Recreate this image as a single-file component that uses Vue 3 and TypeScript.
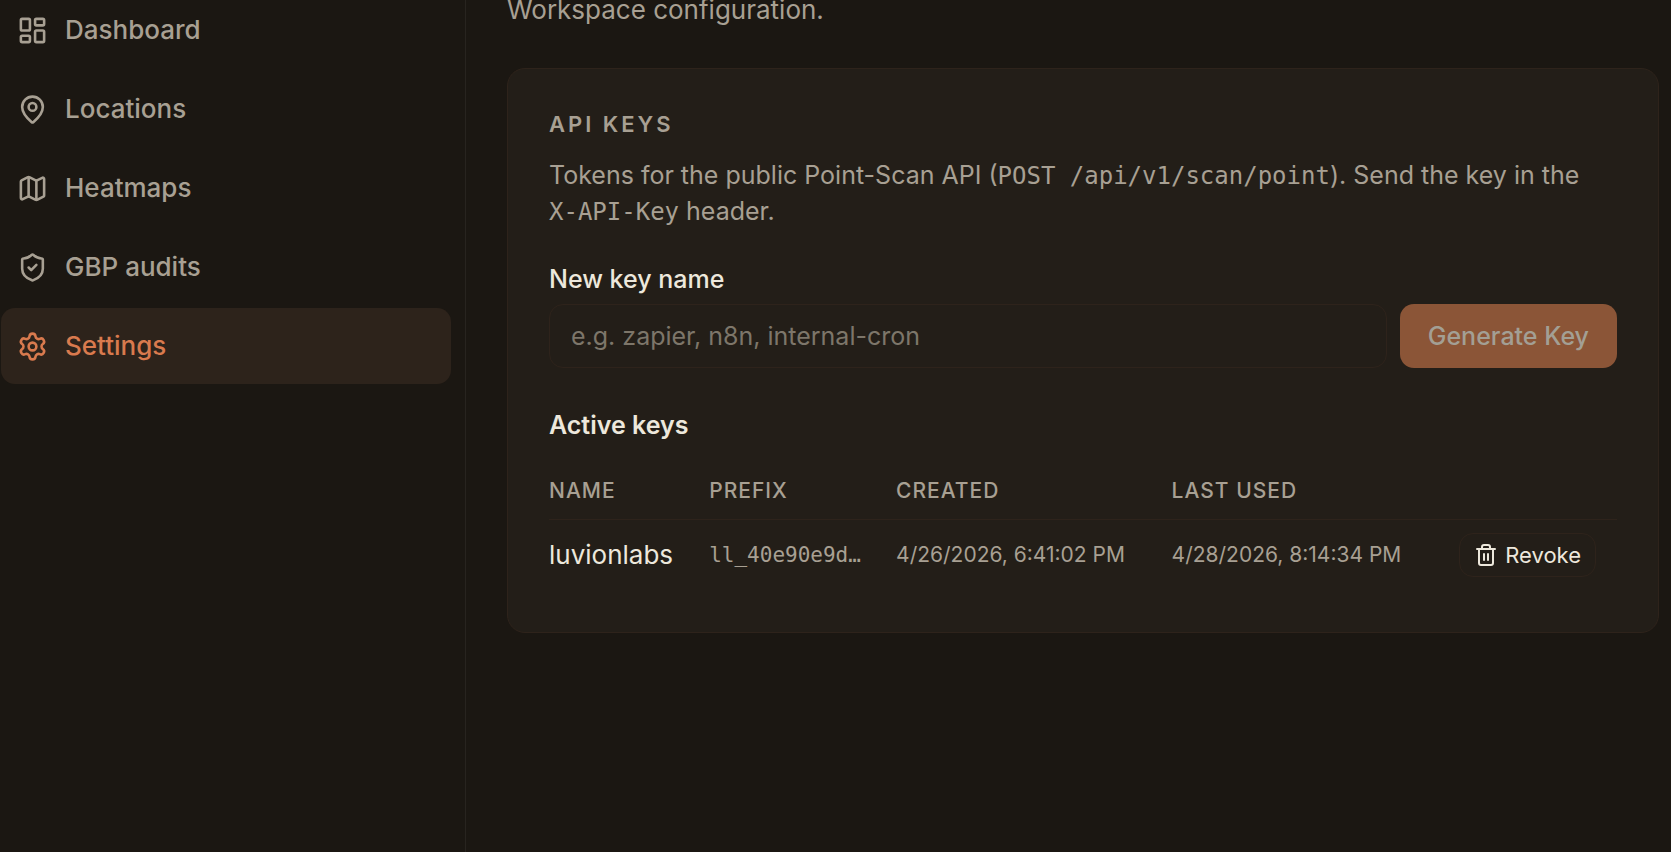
<script setup lang="ts">
import { ref } from 'vue'

interface NavItem {
  label: string
  icon: string
  active?: boolean
}

interface ApiKey {
  name: string
  prefix: string
  created: string
  lastUsed: string
}

const navItems: NavItem[] = [
  { label: 'Dashboard', icon: 'dashboard' },
  { label: 'Locations', icon: 'pin' },
  { label: 'Heatmaps', icon: 'map' },
  { label: 'GBP audits', icon: 'shield' },
  { label: 'Settings', icon: 'settings', active: true },
]

const keys: ApiKey[] = [
  {
    name: 'luvionlabs',
    prefix: 'll_40e90e9d…',
    created: '4/26/2026, 6:41:02 PM',
    lastUsed: '4/28/2026, 8:14:34 PM',
  },
]

const newKeyName = ref('')
</script>

<template>
  <div class="shell">
    <aside class="sidebar">
      <nav class="nav" aria-label="Main">
        <a
          v-for="item in navItems"
          :key="item.label"
          href="#"
          class="nav-item"
          :class="{ active: item.active }"
          :aria-current="item.active ? 'page' : undefined"
        >
          <svg class="icon nav-icon" viewBox="0 0 24 24" aria-hidden="true">
            <template v-if="item.icon === 'dashboard'">
              <rect x="3" y="3" width="7" height="9" rx="1" />
              <rect x="14" y="3" width="7" height="5" rx="1" />
              <rect x="14" y="12" width="7" height="9" rx="1" />
              <rect x="3" y="16" width="7" height="5" rx="1" />
            </template>
            <template v-else-if="item.icon === 'pin'">
              <path d="M20 10c0 4.993-5.539 10.193-7.399 11.799a1 1 0 0 1-1.202 0C9.539 20.193 4 14.993 4 10a8 8 0 0 1 16 0" />
              <circle cx="12" cy="10" r="3" />
            </template>
            <template v-else-if="item.icon === 'map'">
              <path d="M14.106 5.553a2 2 0 0 0 1.788 0l3.659-1.83A1 1 0 0 1 21 4.619v12.764a1 1 0 0 1-.553.894l-4.553 2.277a2 2 0 0 1-1.788 0l-4.212-2.106a2 2 0 0 0-1.788 0l-3.659 1.83A1 1 0 0 1 3 19.381V6.618a1 1 0 0 1 .553-.894l4.553-2.277a2 2 0 0 1 1.788 0z" />
              <path d="M15 5.764v15" />
              <path d="M9 3.236v15" />
            </template>
            <template v-else-if="item.icon === 'shield'">
              <path d="M20 13c0 5-3.5 7.5-7.66 8.95a1 1 0 0 1-.67-.01C7.5 20.5 4 18 4 13V6a1 1 0 0 1 1-1c2 0 4.5-1.2 6.24-2.72a1.17 1.17 0 0 1 1.52 0C14.51 3.81 17 5 19 5a1 1 0 0 1 1 1z" />
              <path d="m9 12 2 2 4-4" />
            </template>
            <template v-else>
              <path d="M9.671 4.136a2.34 2.34 0 0 1 4.659 0 2.34 2.34 0 0 0 3.319 1.915 2.34 2.34 0 0 1 2.33 4.033 2.34 2.34 0 0 0 0 3.831 2.34 2.34 0 0 1-2.33 4.033 2.34 2.34 0 0 0-3.319 1.915 2.34 2.34 0 0 1-4.659 0 2.34 2.34 0 0 0-3.32-1.915 2.34 2.34 0 0 1-2.33-4.033 2.34 2.34 0 0 0 0-3.831A2.34 2.34 0 0 1 6.35 6.051a2.34 2.34 0 0 0 3.319-1.915" />
              <circle cx="12" cy="12" r="3" />
            </template>
          </svg>
          <span>{{ item.label }}</span>
        </a>
      </nav>
    </aside>

    <main class="main">
      <p class="subtitle">Workspace configuration.</p>

      <section class="card" aria-labelledby="api-keys-title">
        <h2 id="api-keys-title" class="card-title">API KEYS</h2>
        <p class="description">
          Tokens for the public Point-Scan API (<code>POST /api/v1/scan/point</code>). Send the key in the
          <code>X-API-Key</code> header.
        </p>

        <form class="key-form" @submit.prevent>
          <label class="label" for="key-name">New key name</label>
          <div class="form-row">
            <input id="key-name" v-model="newKeyName" class="input" type="text" placeholder="e.g. zapier, n8n, internal-cron" />
            <button class="generate" type="submit" :disabled="!newKeyName">Generate Key</button>
          </div>
        </form>

        <h3 id="active-keys" class="section-title">Active keys</h3>
        <table class="keys" aria-labelledby="active-keys">
          <colgroup>
            <col class="col-name" />
            <col class="col-prefix" />
            <col class="col-created" />
            <col class="col-used" />
            <col />
          </colgroup>
          <thead>
            <tr>
              <th scope="col">NAME</th>
              <th scope="col">PREFIX</th>
              <th scope="col">CREATED</th>
              <th scope="col">LAST USED</th>
              <td></td>
            </tr>
          </thead>
          <tbody>
            <tr v-for="key in keys" :key="key.prefix">
              <td class="name">{{ key.name }}</td>
              <td class="prefix">{{ key.prefix }}</td>
              <td class="date">{{ key.created }}</td>
              <td class="date">{{ key.lastUsed }}</td>
              <td class="actions">
                <button class="revoke" type="button">
                  <svg class="icon revoke-icon" viewBox="0 0 24 24" aria-hidden="true">
                    <path d="M3 6h18" />
                    <path d="M19 6v14a2 2 0 0 1-2 2H7a2 2 0 0 1-2-2V6" />
                    <path d="M8 6V4a2 2 0 0 1 2-2h4a2 2 0 0 1 2 2v2" />
                    <path d="M10 11v6" />
                    <path d="M14 11v6" />
                  </svg>
                  Revoke
                </button>
              </td>
            </tr>
          </tbody>
        </table>
      </section>
    </main>
  </div>
</template>

<style>
body {
  margin: 0;
  background: #1b1712;
}
</style>

<style scoped>
.shell {
  display: flex;
  min-height: 100vh;
  overflow: hidden;
  background: #1b1712;
  color: #a8a093;
  font-family: Inter, "Liberation Sans", sans-serif;
  font-size: 25px;
  line-height: 36px;
}

.shell *,
.shell *::before {
  box-sizing: border-box;
}

.sidebar {
  flex: 0 0 466px;
  padding: 0 14px 0 1px;
  border-right: 1px solid #28241f;
}

.nav {
  display: flex;
  flex-direction: column;
  gap: 3px;
  margin-top: -8px;
}

.nav-item {
  display: flex;
  align-items: center;
  gap: 17px;
  height: 76px;
  padding: 0 16px;
  border-radius: 14px;
  color: #a8a093;
  font-size: 26px;
  font-weight: 500;
  text-decoration: none;
}

.nav-item.active {
  background: #2d231b;
  color: #d97a4e;
}

.icon {
  flex: none;
  fill: none;
  stroke: currentColor;
  stroke-width: 2;
  stroke-linecap: round;
  stroke-linejoin: round;
}

.nav-icon {
  width: 31px;
  height: 31px;
}

.main {
  flex: 1;
  min-width: 0;
  padding: 0 12px 41px 41px;
}

.subtitle {
  margin: -8px 0 40px;
  font-size: 26px;
}

.card {
  padding: 37px 41px 41px;
  border: 1px solid #2e231b;
  border-radius: 18px;
  background: #231e18;
}

.card-title {
  margin: 0 0 15px;
  font-size: 22px;
  font-weight: 600;
  letter-spacing: 3px;
}

.description {
  margin: 0;
}

code {
  font-family: "DejaVu Sans Mono", monospace;
  font-size: 24px;
  line-height: 24px;
  white-space: nowrap;
}

.key-form {
  margin-top: 32px;
}

.label {
  display: block;
  margin-bottom: 7px;
  color: #ede8dc;
  font-weight: 500;
}

.form-row {
  display: flex;
  gap: 13px;
}

.input {
  flex: 1;
  min-width: 0;
  height: 64px;
  padding: 0 21px;
  border: 1px solid #2e231b;
  border-radius: 14px;
  outline: none;
  background: transparent;
  color: #ede8dc;
  font: inherit;
}

.input::placeholder {
  color: #7d766a;
  opacity: 1;
}

.generate {
  height: 64px;
  padding: 0 28px;
  border: 0;
  border-radius: 14px;
  background: #8b5537;
  color: #a39f94;
  font: inherit;
  font-weight: 500;
}

.section-title {
  margin: 39px 0 20px;
  color: #ede8dc;
  font-size: 25px;
  font-weight: 600;
}

.keys {
  width: 100%;
  border-collapse: collapse;
  table-layout: fixed;
}

.col-name {
  width: 15%;
}

.col-prefix {
  width: 17.5%;
}

.col-created {
  width: 25.8%;
}

.col-used {
  width: 24%;
}

.keys th,
.keys td {
  padding: 0;
  text-align: left;
  white-space: nowrap;
}

.keys thead th {
  height: 56px;
  font-size: 21px;
  font-weight: 500;
  letter-spacing: 1px;
}

.keys thead tr {
  border-bottom: 1px solid #2e231b;
}

.keys tbody td {
  height: 72px;
}

.keys .name {
  color: #ede8dc;
  font-size: 26px;
}

.keys .prefix {
  font-family: "DejaVu Sans Mono", monospace;
  font-size: 21px;
}

.keys .date {
  font-size: 21px;
}

.keys .actions {
  padding-right: 21px;
  text-align: right;
}

.revoke {
  display: inline-flex;
  align-items: center;
  gap: 7px;
  height: 44px;
  padding: 0 14px;
  border: 1px solid #2e231b;
  border-radius: 14px;
  background: transparent;
  color: #ede8dc;
  font: inherit;
  font-size: 22px;
}

.revoke-icon {
  width: 24px;
  height: 24px;
}
</style>
